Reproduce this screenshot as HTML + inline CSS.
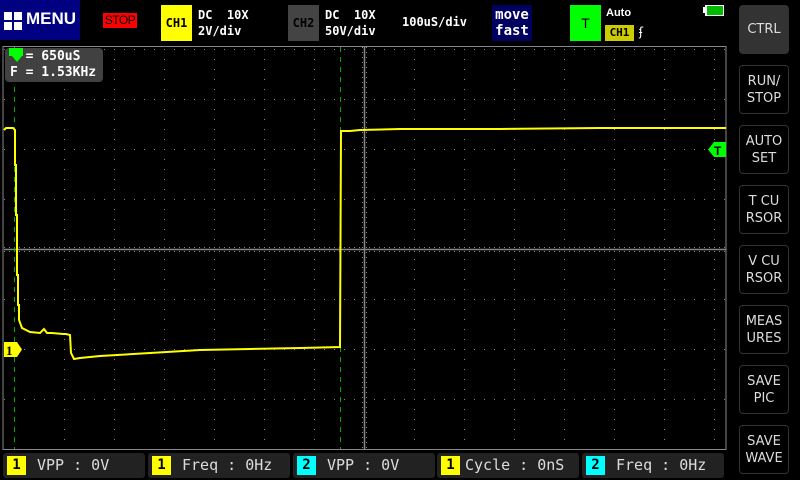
<!DOCTYPE html>
<html><head><meta charset="utf-8"><style>
body{margin:0;width:800px;height:480px;background:#000;position:relative;overflow:hidden;font-family:"Liberation Mono","DejaVu Sans Mono",monospace;color:#fff}
.a{position:absolute}
.btn{position:absolute;left:739px;width:50px;height:49px;border:1px solid #333;border-radius:4px;color:#ddd;font:13px "DejaVu Sans","Liberation Sans",sans-serif;display:flex;align-items:center;justify-content:center;text-align:center;line-height:17px;box-sizing:border-box}
.bb{position:absolute;top:453px;height:25px;width:142px;background:#222;border-radius:3px;font:15px "DejaVu Sans Mono",monospace;color:#ddd}
.bb .n{position:absolute;left:4px;top:3px;width:19px;height:19px;background:#ff0;color:#000;text-align:center;line-height:19px;font-weight:bold;font-size:14px}
.bb .t{position:absolute;left:34px;top:3px;white-space:pre}
.h{font:bold 12px 'DejaVu Sans Mono',monospace;line-height:16px;white-space:pre}
</style></head><body>
<div class="a" style="left:0;top:0;width:80px;height:40px;background:#000080"></div>
<svg class="a" style="left:4px;top:12px" width="18" height="18"><rect x="0" y="0" width="8" height="8" fill="#fff"/><rect x="10" y="0" width="8" height="8" fill="#fff"/><rect x="0" y="10" width="8" height="8" fill="#fff"/><rect x="10" y="10" width="8" height="8" fill="#fff"/></svg>
<div class="a" style="left:26px;top:9px;font:bold 17px 'Liberation Sans',sans-serif">MENU</div>
<div class="a" style="left:103px;top:13px;width:34px;height:15px;background:#f00;color:#000;font:12px 'Liberation Sans',sans-serif;line-height:15px;text-align:center;letter-spacing:-0.5px">STOP</div>
<div class="a" style="left:161px;top:5px;width:31px;height:36px;background:#ff0;color:#000;font:bold 12px 'DejaVu Sans Mono',monospace;line-height:36px;text-align:center">CH1</div>
<div class="a h" style="left:198px;top:7px">DC  10X
2V/div</div>
<div class="a" style="left:288px;top:5px;width:31px;height:36px;background:#444;color:#000;font:bold 12px 'DejaVu Sans Mono',monospace;line-height:36px;text-align:center">CH2</div>
<div class="a h" style="left:325px;top:7px">DC  10X
50V/div</div>
<div class="a h" style="left:402px;top:14px">100uS/div</div>
<div class="a" style="left:492px;top:5px;width:40px;height:36px;background:#000060;font:bold 14px 'DejaVu Sans Mono',monospace;line-height:16px;text-align:center;padding-top:2px;box-sizing:border-box">move<br>fast</div>
<div class="a" style="left:570px;top:5px;width:31px;height:36px;background:#0f0;color:#000;font:14px 'Liberation Sans',sans-serif;line-height:36px;text-align:center">T</div>
<div class="a" style="left:606px;top:7px;font:bold 11px 'Liberation Sans',sans-serif">Auto</div>
<div class="a" style="left:605px;top:25px;width:29px;height:16px;background:#cc0;color:#000;font:bold 11px 'DejaVu Sans Mono',monospace;line-height:16px;text-align:center">CH1</div>
<div class="a" style="left:639px;top:25px;font:12px 'DejaVu Sans',sans-serif">ʄ</div>
<div class="a" style="left:703px;top:7px;width:2px;height:6px;background:#fff"></div>
<div class="a" style="left:705px;top:5px;width:19px;height:11px;background:#fff"></div>
<div class="a" style="left:707px;top:6px;width:16px;height:9px;background:#0b0"></div>

<svg class="a" style="left:0;top:0" width="730" height="452">
<rect x="3" y="46.5" width="723" height="403" fill="none" stroke="#888" stroke-width="1"/>
<g stroke="#888" stroke-width="1" stroke-dasharray="1 9">
<path d="M64.5 49V449M114.5 49V449M164.5 49V449M214.5 49V449M264.5 49V449M314.5 49V449M414.5 49V449M464.5 49V449M514.5 49V449M564.5 49V449M614.5 49V449M664.5 49V449M714.5 49V449"/>
<path d="M4 49.5H726M4 99.5H726M4 149.5H726M4 199.5H726M4 299.5H726M4 349.5H726M4 399.5H726"/>
</g>
<path d="M4 249.5H726M364.5 47V449" stroke="#888" stroke-width="1.5"/>
<g stroke="#888" stroke-width="1" stroke-dasharray="1 4"><path d="M4 247.5H726M4 251.5H726M362.5 47V449M366.5 47V449"/></g>
<path d="M14.5 47V449M340.5 47V449" stroke="#0a0" stroke-width="1" stroke-dasharray="5 5"/>
<polyline fill="none" stroke="#ff0" stroke-width="2" points="4,130 6,128 13,128 15,130 15,165 16,165 16,215 17,215 17,275 18,275 18,305 19,305 19,320 22,328 30,332 40,333 44,329 47,333 52,333 63,334 66,334 70,335 71,353 74,359 80,358 100,356 150,353 200,350 250,349 300,348 340,347 341,131 350,131 360,130 400,129 500,129 600,128 726,128"/>
<polygon points="4,342 17,342 22,349.5 17,357 4,357" fill="#ff0"/>
<text x="6" y="355" font-family="Liberation Serif,serif" font-weight="bold" font-size="13" fill="#000">1</text>
<polygon points="726,142 714,142 708,149.5 714,157 726,157" fill="#0f0"/>
<text x="714" y="155" font-family="Liberation Sans,sans-serif" font-weight="bold" font-size="12" fill="#000">T</text>
</svg>

<div class="a" style="left:5px;top:48px;width:98px;height:34px;background:#444;border-radius:4px;opacity:.95"></div>
<div class="a" style="left:9px;top:48px;width:14px;height:8px;background:#0f0"></div>
<div class="a" style="left:12px;top:56px;width:0;height:0;border-left:5px solid transparent;border-right:5px solid transparent;border-top:6px solid #0f0"></div>
<div class="a" style="left:10px;top:49px;font:bold 13px 'DejaVu Sans Mono',monospace;line-height:16px;white-space:pre">  = 650uS
F = 1.53KHz</div>

<div class="btn" style="top:5px;background:#333">CTRL</div>
<div class="btn" style="top:65px">RUN/<br>STOP</div>
<div class="btn" style="top:125px">AUTO<br>SET</div>
<div class="btn" style="top:185px">T CU<br>RSOR</div>
<div class="btn" style="top:245px">V CU<br>RSOR</div>
<div class="btn" style="top:305px">MEAS<br>URES</div>
<div class="btn" style="top:365px">SAVE<br>PIC</div>
<div class="btn" style="top:425px">SAVE<br>WAVE</div>

<div class="bb" style="left:3px"><div class="n">1</div><div class="t">VPP : 0V</div></div>
<div class="bb" style="left:148px"><div class="n">1</div><div class="t">Freq : 0Hz</div></div>
<div class="bb" style="left:293px"><div class="n" style="background:#0ff">2</div><div class="t">VPP : 0V</div></div>
<div class="bb" style="left:437px"><div class="n">1</div><div class="t" style="left:28px">Cycle : 0nS</div></div>
<div class="bb" style="left:582px"><div class="n" style="background:#0ff">2</div><div class="t">Freq : 0Hz</div></div>
</body></html>
